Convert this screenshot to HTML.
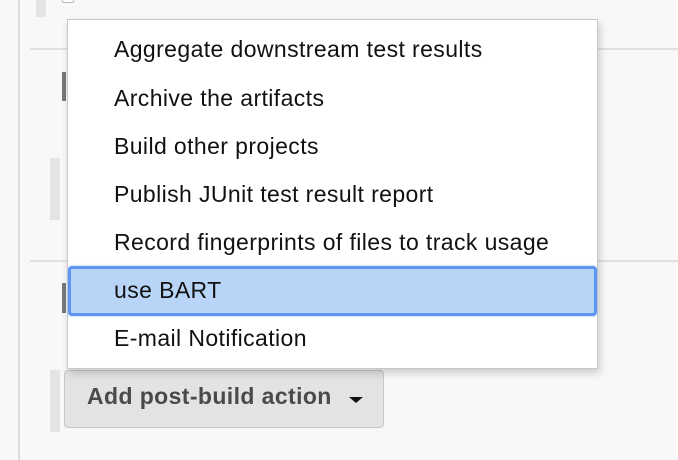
<!DOCTYPE html>
<html><head><style>
*{margin:0;padding:0;box-sizing:border-box}
body{width:678px;height:460px;background:#f8f8f8;position:relative;overflow:hidden;font-family:"Liberation Sans",Arial,sans-serif}
.a{position:absolute}
.menu{left:67px;top:19px;width:531px;height:350px;background:#fff;border:1px solid #c8c8c8;box-shadow:2px 4px 8px rgba(0,0,0,.18)}
.it{position:absolute;left:46px;font-size:23px;letter-spacing:0.4px;color:#111;line-height:24px}
.hl{left:0px;top:246px;width:529px;height:50px;background:#b8d5f8;border:3px solid #5e95f0;border-radius:4px;box-shadow:0 0 2px #9bbcf5}
.btn{left:64px;top:370px;width:320px;height:58px;background:#e3e3e3;border:1px solid #c8c8c8;border-radius:4px}
</style></head><body>
<div class="a" style="left:18px;top:0;width:2px;height:460px;background:#ddd"></div>
<div class="a" style="left:36px;top:0;width:10px;height:17px;background:#e4e4e4"></div>
<div class="a" style="left:62px;top:-6px;width:12px;height:9px;border:1px solid #bbb;border-radius:2px;background:#fff"></div>
<div class="a" style="left:30px;top:48px;width:648px;height:2px;background:#e0e0e0"></div>
<div class="a" style="left:30px;top:260px;width:648px;height:2px;background:#e0e0e0"></div>
<div class="a" style="left:62px;top:72px;width:4px;height:29px;background:#777"></div>
<div class="a" style="left:62px;top:283px;width:4px;height:30px;background:#777"></div>
<div class="a" style="left:50px;top:158px;width:10px;height:62px;background:#e4e4e4"></div>
<div class="a" style="left:50px;top:370px;width:10px;height:62px;background:#e4e4e4"></div>
<div class="a btn"></div>
<div class="a" style="left:87px;top:383px;font-size:23px;letter-spacing:0.4px;font-weight:bold;color:#4a4a4a">Add post-build action</div>
<div class="a" style="left:349px;top:397px;width:0;height:0;border-left:7px solid transparent;border-right:7px solid transparent;border-top:6px solid #111"></div>
<div class="a menu">
<div class="a hl"></div>
<div class="it" style="top:17px">Aggregate downstream test results</div>
<div class="it" style="top:66px">Archive the artifacts</div>
<div class="it" style="top:114px">Build other projects</div>
<div class="it" style="top:162px">Publish JUnit test result report</div>
<div class="it" style="top:210px">Record fingerprints of files to track usage</div>
<div class="it" style="top:258px">use BART</div>
<div class="it" style="top:306px">E-mail Notification</div>
</div>
</body></html>
